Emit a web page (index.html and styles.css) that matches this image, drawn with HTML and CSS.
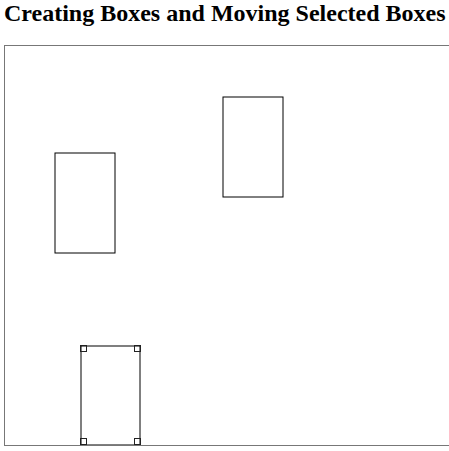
FILE: index.html
```html
<!DOCTYPE html>
<html lang="en">
<head>
  <meta charset="UTF-8" />
  <title>Creating Boxes and Moving Selected Boxes</title>
  <link rel="stylesheet" href="styles.css">
</head>
<body>
  <h2 class="title">Creating Boxes and Moving Selected Boxes</h2>

  <div class="board">
    <svg class="surface" height="399">
      <rect class="box" x="50" y="107" width="60" height="100" />
      <rect class="box" x="218" y="51" width="60" height="100" />

      <!-- selected box -->
      <rect class="box" x="76" y="300" width="59" height="99" />
      <g class="handles">
        <rect x="75.5" y="299.5" width="6" height="6" />
        <rect x="129.5" y="299.5" width="6" height="6" />
        <rect x="75.5" y="392.5" width="6" height="6" />
        <rect x="129.5" y="392.5" width="6" height="6" />
      </g>
    </svg>
  </div>
</body>
</html>
```

FILE: styles.css
```css
html,
body {
  overflow: hidden;
}

body {
  margin: 0;
  padding: 0 0 0 4px;
  background: #fff;
  color: #000;
  font-family: "Liberation Serif", "Times New Roman", serif;
}

.title {
  margin: 0 0 18px;
  font-size: 24px;
  font-weight: bold;
  white-space: nowrap;
}

.board {
  border: 1px solid #777;
  border-right: none;
}

.surface {
  display: block;
  width: 100%;
}

.box {
  fill: none;
  stroke: #000;
  stroke-width: 1;
}

.handles rect {
  fill: none;
  stroke: #222;
  stroke-width: 1;
  shape-rendering: crispEdges;
}
```
